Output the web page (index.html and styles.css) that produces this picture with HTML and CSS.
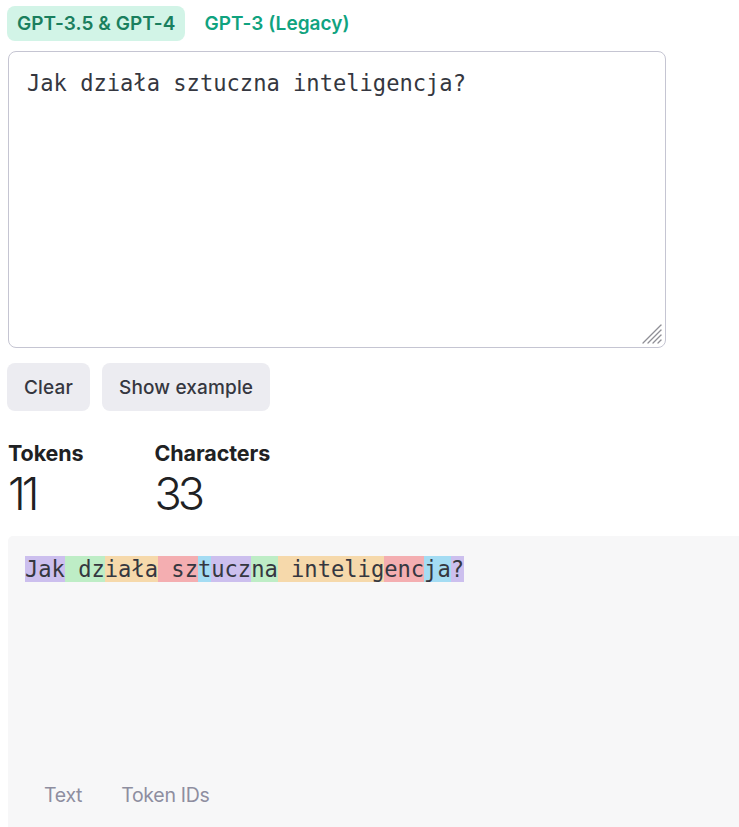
FILE: index.html
```html
<!DOCTYPE html>
<html lang="pl">
<head>
<meta charset="utf-8">
<title>Tokenizer</title>
<link rel="stylesheet" href="styles.css">
</head>
<body>
<main class="tokenizer">
  <nav class="model-tabs">
    <button class="model-tab active">GPT-3.5 &amp; GPT-4</button>
    <button class="model-tab">GPT-3 (Legacy)</button>
  </nav>

  <div class="prompt-wrap">
    <textarea class="prompt" spellcheck="false">Jak działa sztuczna inteligencja?</textarea>
    <svg class="grip" width="22" height="22" viewBox="0 0 22 22" aria-hidden="true">
      <g stroke="#8f8f96" stroke-width="1.3" stroke-linecap="round">
        <line x1="20" y1="2" x2="2" y2="20"/>
        <line x1="20" y1="7" x2="7" y2="20"/>
        <line x1="20" y1="12" x2="12" y2="20"/>
        <line x1="20" y1="17" x2="17" y2="20"/>
      </g>
    </svg>
  </div>

  <div class="actions">
    <button class="btn">Clear</button>
    <button class="btn">Show example</button>
  </div>

  <div class="stats">
    <div class="stat">
      <div class="stat-label">Tokens</div>
      <div class="stat-value">11</div>
    </div>
    <div class="stat">
      <div class="stat-label">Characters</div>
      <div class="stat-value">33</div>
    </div>
  </div>

  <section class="output">
    <div class="tokens"><span class="t t0">Jak</span><span class="t t1"> dz</span><span class="t t2">iała</span><span class="t t3"> sz</span><span class="t t4">t</span><span class="t t0">ucz</span><span class="t t1">na</span><span class="t t2"> intelig</span><span class="t t3">enc</span><span class="t t4">ja</span><span class="t t0">?</span></div>
    <div class="view-tabs">
      <span class="view-tab">Text</span>
      <span class="view-tab">Token IDs</span>
    </div>
  </section>
</main>
</body>
</html>
```

FILE: styles.css
```css
* {
  box-sizing: border-box;
}

html, body {
  margin: 0;
  background: #ffffff;
}

body {
  font-family: Inter, "Liberation Sans", sans-serif;
  color: #202123;
}

.tokenizer {
  padding: 6px 0 0 8px;
  display: flex;
  flex-direction: column;
}

button {
  font-family: inherit;
  border: none;
  cursor: pointer;
}

/* model switcher */
.model-tabs {
  display: flex;
  gap: 9px;
  margin-left: -1px;
}

.model-tab {
  height: 35px;
  padding: 0 10px;
  border-radius: 8px;
  background: transparent;
  color: #10a37f;
  font-size: 19px;
  font-weight: 600;
  letter-spacing: 0.05px;
}

.model-tab.active {
  background: #d2f4e7;
  color: #1a7f5e;
}

/* input */
.prompt-wrap {
  position: relative;
  margin-top: 10px;
  width: 658px;
  height: 297px;
}

.prompt {
  display: block;
  width: 100%;
  height: 100%;
  padding: 18px 18px;
  border: 1px solid #c5c5d2;
  border-radius: 8px;
  font-family: "DejaVu Sans Mono", "Liberation Mono", monospace;
  font-size: 22.1px;
  line-height: 26px;
  color: #353740;
  resize: none;
  outline: none;
}

.grip {
  position: absolute;
  right: 3px;
  bottom: 3px;
  pointer-events: none;
}

.actions {
  display: flex;
  gap: 12px;
  margin-top: 15px;
  margin-left: -1px;
}

.btn {
  height: 48px;
  padding: 0 17px;
  border-radius: 8px;
  background: #ececf1;
  color: #353740;
  font-size: 19px;
  font-weight: 500;
  letter-spacing: 0.15px;
}

/* counters */
.stats {
  display: flex;
  gap: 71px;
  margin-top: 30px;
}

.stat-label {
  font-size: 21.5px;
  font-weight: 700;
  letter-spacing: -0.1px;
  line-height: 24px;
}

.stat-value {
  margin-top: 6px;
  font-size: 45px;
  font-weight: 300;
  line-height: 46px;
  letter-spacing: -4px;
}

/* tokenized output */
.output {
  margin-top: 19px;
  margin-right: -8px;
  height: 300px;
  background: #f7f7f8;
  border-radius: 5px 0 0 5px;
  padding: 20px 17px;
  display: flex;
  flex-direction: column;
}

.tokens {
  font-family: "DejaVu Sans Mono", "Liberation Mono", monospace;
  font-size: 22.1px;
  line-height: 26px;
  color: #353740;
  white-space: pre-wrap;
  min-height: 227px;
}

.t0 { background: rgba(107, 64, 216, 0.3); }
.t1 { background: rgba(104, 222, 122, 0.4); }
.t2 { background: rgba(244, 172, 54, 0.4); }
.t3 { background: rgba(239, 65, 70, 0.4); }
.t4 { background: rgba(39, 181, 234, 0.4); }

.view-tabs {
  display: flex;
  gap: 39px;
  padding-left: 19px;
}

.view-tab {
  font-size: 19.5px;
  line-height: 24px;
  color: #8e8ea0;
  letter-spacing: -0.3px;
}
```
